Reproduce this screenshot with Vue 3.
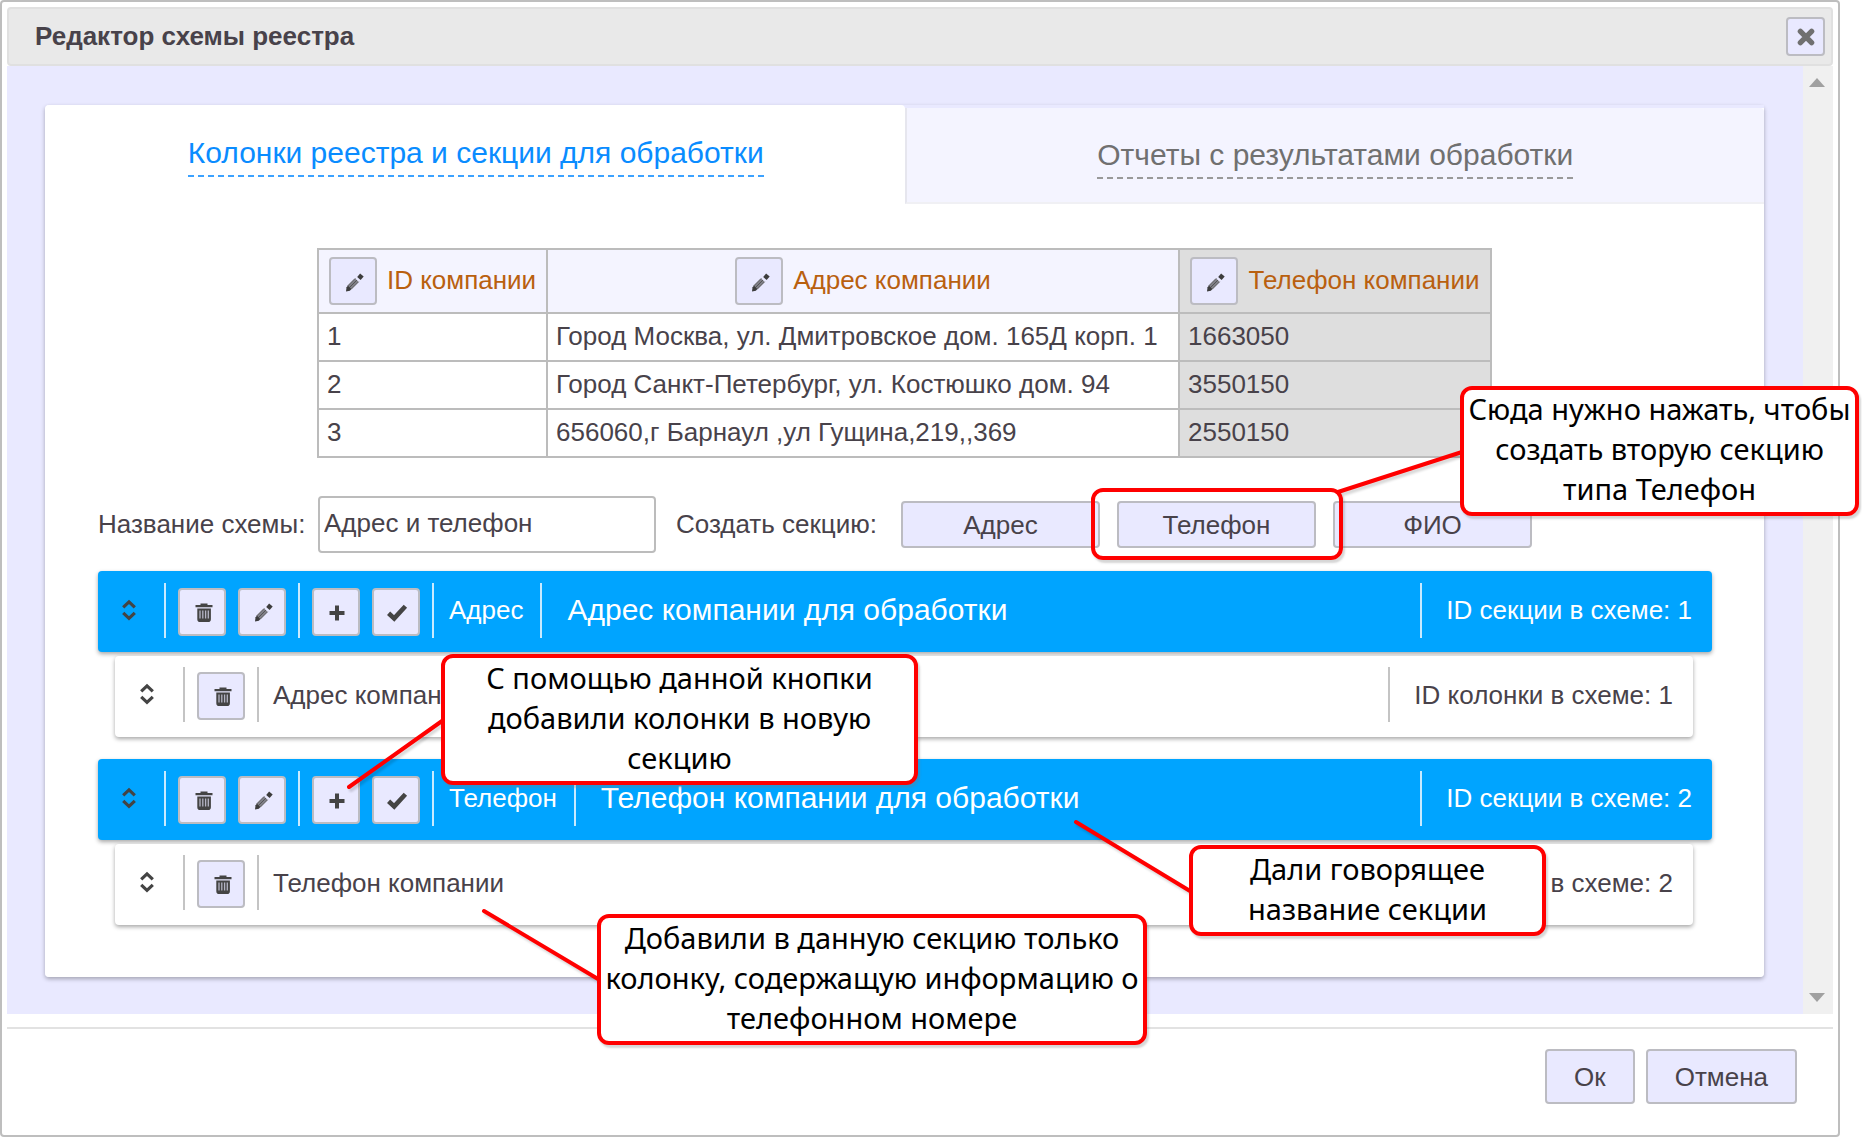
<script setup>
import { ref } from 'vue'

const schemeName = ref('Адрес и телефон')

const columns = [
  { title: 'ID компании', kind: 'id' },
  { title: 'Адрес компании', kind: 'address' },
  { title: 'Телефон компании', kind: 'phone' },
]

const rows = [
  ['1', 'Город Москва, ул. Дмитровское дом. 165Д корп. 1', '1663050'],
  ['2', 'Город Санкт-Петербург, ул. Костюшко дом. 94', '3550150'],
  ['3', '656060,г Барнаул ,ул Гущина,219,,369', '2550150'],
]

const sectionTypes = ['Адрес', 'Телефон', 'ФИО']

const sections = [
  { id: 1, type: 'Адрес', title: 'Адрес компании для обработки', column: 'Адрес компании' },
  { id: 2, type: 'Телефон', title: 'Телефон компании для обработки', column: 'Телефон компании' },
]

const callouts = [
  { name: 'create', lines: ['Сюда нужно нажать, чтобы', 'создать вторую секцию', 'типа Телефон'] },
  { name: 'add', lines: ['С помощью данной кнопки', 'добавили колонки в новую', 'секцию'] },
  { name: 'column', lines: ['Добавили в данную секцию только', 'колонку, содержащую информацию о', 'телефонном номере'] },
  { name: 'title', lines: ['Дали говорящее', 'название секции'] },
]
</script>

<template>
  <div class="stage">
    <svg class="sprite" aria-hidden="true">
      <symbol id="i-pencil" viewBox="0 0 24 24">
        <path d="M4.4 15.2l7.8-7.8 3.4 3.4-7.8 7.8z" fill="#808088" />
        <path d="M4.6 15l7.6-7.6M8 18.4l7.6-7.6M6.3 16.7l7.6-7.6" stroke="#555" stroke-width="1" fill="none" />
        <path d="M3 20.4l.5-4.2 1.6-1.4 3.2 3.2-1.4 1.7z" fill="#3c3c3c" />
        <path d="M14.2 5.9l2.9-3.3 3.6 3-3.1 3.4z" fill="#3c3c3c" />
      </symbol>
      <symbol id="i-trash" viewBox="0 0 24 24">
        <path d="M8.5 2.5h7V4h5v2.2h-17V4h5z" fill="#444" />
        <path d="M5.3 7.6h13.6v10.6q0 2.8-2.8 2.8h-8q-2.8 0-2.8-2.8z" fill="#444" />
        <path d="M8 9.6v8M10.8 9.6v8M13.6 9.6v8M16.3 9.6v8" stroke="#b4b4c4" stroke-width="1.3" />
      </symbol>
      <symbol id="i-plus" viewBox="0 0 24 24">
        <path d="M11 4.5v15M3.5 12h15" stroke="#444" stroke-width="4" />
      </symbol>
      <symbol id="i-check" viewBox="0 0 24 24">
        <path d="M2.6 12.2l5.6 5.2L19.4 5.2" stroke="#444" stroke-width="4.6" fill="none" />
      </symbol>
      <symbol id="i-sort" viewBox="0 0 24 24">
        <path d="M6.2 9.4L12 3.9l5.8 5.5M6.2 14.8l5.8 5.5 5.8-5.5" stroke="#444" stroke-width="3.2" fill="none" />
      </symbol>
      <symbol id="i-close" viewBox="0 0 24 24">
        <path d="M6.4 6.4l11.2 11.2M17.6 6.4L6.4 17.6" stroke="#707070" stroke-width="5.4" stroke-linecap="round" />
      </symbol>
    </svg>

    <section class="dialog" role="dialog" aria-labelledby="dialog-title">
      <header class="dialog-header">
        <h1 id="dialog-title">Редактор схемы реестра</h1>
        <button class="btn close" type="button" aria-label="Закрыть">
          <svg width="24" height="24"><use href="#i-close" /></svg>
        </button>
      </header>

      <div class="dialog-body">
        <main class="content">
          <div class="card">
            <nav class="tabs">
              <div class="tab active"><a href="#columns">Колонки реестра и секции для обработки</a></div>
              <div class="tab"><a href="#reports">Отчеты с результатами обработки</a></div>
            </nav>

            <table class="preview">
              <thead>
                <tr>
                  <th v-for="c in columns" :key="c.kind" :class="c.kind">
                    <div class="head">
                      <button class="btn icon" type="button" :aria-label="'Изменить ' + c.title">
                        <svg width="24" height="24"><use href="#i-pencil" /></svg>
                      </button>
                      <span>{{ c.title }}</span>
                    </div>
                  </th>
                </tr>
              </thead>
              <tbody>
                <tr v-for="r in rows" :key="r[0]">
                  <td v-for="(v, i) in r" :key="i" :class="columns[i].kind">{{ v }}</td>
                </tr>
              </tbody>
            </table>

            <form class="scheme" @submit.prevent>
              <label for="scheme-name">Название схемы:</label>
              <input id="scheme-name" v-model="schemeName" type="text" />
              <span class="create-label">Создать секцию:</span>
              <div class="create">
                <button v-for="t in sectionTypes" :key="t" class="btn" type="button">{{ t }}</button>
              </div>
            </form>

            <div class="sections">
              <article v-for="s in sections" :key="s.id" class="section">
                <div class="row section-row">
                  <span class="handle"><svg width="24" height="24"><use href="#i-sort" /></svg></span>
                  <i class="rule"></i>
                  <button class="btn icon" type="button" aria-label="Удалить секцию">
                    <svg width="24" height="24"><use href="#i-trash" /></svg>
                  </button>
                  <button class="btn icon" type="button" aria-label="Изменить секцию">
                    <svg width="24" height="24"><use href="#i-pencil" /></svg>
                  </button>
                  <i class="rule"></i>
                  <button class="btn icon" type="button" aria-label="Добавить колонки">
                    <svg width="24" height="24"><use href="#i-plus" /></svg>
                  </button>
                  <button class="btn icon" type="button" aria-label="Выбрать">
                    <svg width="24" height="24"><use href="#i-check" /></svg>
                  </button>
                  <i class="rule"></i>
                  <span class="type">{{ s.type }}</span>
                  <i class="rule"></i>
                  <h2>{{ s.title }}</h2>
                  <i class="rule"></i>
                  <span class="row-id">ID секции в схеме: {{ s.id }}</span>
                </div>
                <div class="row column-row">
                  <span class="handle"><svg width="24" height="24"><use href="#i-sort" /></svg></span>
                  <i class="rule"></i>
                  <button class="btn icon" type="button" aria-label="Удалить колонку">
                    <svg width="24" height="24"><use href="#i-trash" /></svg>
                  </button>
                  <i class="rule"></i>
                  <span class="name">{{ s.column }}</span>
                  <i class="rule"></i>
                  <span class="row-id">ID колонки в схеме: {{ s.id }}</span>
                </div>
              </article>
            </div>
          </div>
        </main>
        <div class="scrollbar" aria-hidden="true">
          <svg width="16" height="9"><path d="M0 9L8 0l8 9z" fill="#a0a0a0" /></svg>
          <svg width="16" height="9"><path d="M0 0h16L8 9z" fill="#a0a0a0" /></svg>
        </div>
      </div>

      <footer class="dialog-footer">
        <button class="btn" type="button">Ок</button>
        <button class="btn" type="button">Отмена</button>
      </footer>
    </section>

    <div class="notes">
      <svg class="pointers" aria-hidden="true">
        <path d="M1462 452L1338 492M442 721L349 787M598 979L484 911M1190 891L1076 822" />
      </svg>
      <div class="highlight"></div>
      <p v-for="c in callouts" :key="c.name" class="callout" :class="'callout-' + c.name">
        <span v-for="l in c.lines" :key="l">{{ l }}</span>
      </p>
    </div>
  </div>
</template>

<style>
body {
  margin: 0;
  background: #fff;
}
</style>

<style scoped>
* {
  box-sizing: border-box;
}

.stage {
  position: relative;
  padding: 0 22px 1px 0;
  font: 26px/32px "Liberation Sans", Arial, sans-serif;
  color: #48424a;
}

.sprite {
  position: absolute;
  width: 0;
  height: 0;
}

.dialog {
  padding: 5px;
  border: 2px solid #bebebe;
  border-radius: 4px;
  background: #fff;
}

.dialog-header {
  display: flex;
  align-items: center;
  justify-content: space-between;
  height: 59px;
  padding: 0 6px 0 26px;
  border: 2px solid #e0e0e0;
  border-radius: 4px;
  background: #e9e9e9;
}

h1 {
  margin: 0;
  padding-bottom: 2px;
  font-size: 26px;
  font-weight: bold;
}

.btn {
  padding: 0;
  border: 2px solid #bcbcc2;
  border-radius: 4px;
  background: #e9e9ff;
  color: inherit;
  font: inherit;
}

.btn svg {
  display: block;
}

.close {
  width: 39px;
  height: 39px;
  padding: 1px 0 0 6px;
}

.dialog-body {
  display: flex;
}

.content {
  flex: 1;
  padding: 39px 39px 37px 38px;
  background: #e9e9ff;
}

.scrollbar {
  display: flex;
  flex-direction: column;
  align-items: center;
  justify-content: space-between;
  width: 30px;
  padding: 12px 2px 12px 0;
  background: #f0f0f0;
}

.card {
  padding-bottom: 52px;
  border-radius: 4px;
  background: linear-gradient(#fff, #fff) 0 3px / 100% 100% no-repeat;
  box-shadow: 0 2px 4px rgba(0, 0, 0, 0.3);
}

.tabs {
  display: flex;
  align-items: flex-end;
  background: linear-gradient(#e9e9ff, #e9e9ff) 100% 0 / 50% 3px no-repeat;
}

.tab {
  flex: 1;
  height: 96px;
  padding-top: 29px;
  border-bottom: 2px solid #f0f0f4;
  border-left: 2px solid #e6e6ee;
  border-radius: 0 4px 0 0;
  background: #f4f4ff;
  text-align: center;
  font-size: 30px;
  line-height: 36px;
}

.tab.active {
  height: 99px;
  padding-top: 30px;
  border-color: #fff;
  border-radius: 4px 4px 0 0;
  background: #fff;
}

.tab a {
  display: inline-block;
  padding-bottom: 4px;
  border-bottom: 2px dashed #999;
  color: #707070;
  text-decoration: none;
}

.tab.active a {
  border-color: #3ca2ff;
  color: #0a8cff;
}

.preview {
  margin: 44px auto 0;
  border-collapse: collapse;
}

.preview th,
.preview td {
  height: 48px;
  padding: 0 8px;
  border: 2px solid #bcbcbc;
  white-space: nowrap;
  text-align: left;
}

.preview td {
  padding-bottom: 2px;
}

.preview th {
  height: 64px;
  background: #f4f4ff;
  color: #b9600f;
  font-weight: normal;
}

.preview .id {
  width: 229px;
}

.preview .address {
  width: 632px;
}

.preview .phone {
  width: 312px;
  background: #dedede;
}

.head {
  display: flex;
  align-items: center;
  justify-content: center;
  gap: 10px;
}

.head span {
  padding-bottom: 2px;
}

.icon {
  flex: none;
  width: 48px;
  height: 48px;
  padding: 3px 0 0 12px;
}

.scheme {
  display: flex;
  align-items: center;
  margin-top: 38px;
  padding: 0 53px;
  white-space: nowrap;
}

.scheme label {
  width: 220px;
  padding-bottom: 2px;
}

.scheme input {
  width: 338px;
  height: 57px;
  padding: 0 4px 2px;
  border: 2px solid #bcbcbc;
  border-radius: 4px;
  background: #fff;
  color: inherit;
  font: inherit;
}

.create-label {
  width: 225px;
  margin-left: 20px;
  padding-bottom: 2px;
}

.create {
  display: flex;
  gap: 17px;
}

.create .btn {
  width: 199px;
  height: 47px;
}

.sections {
  display: flex;
  flex-direction: column;
  gap: 22px;
  margin: 18px 52px 0 53px;
}

.section {
  display: flex;
  flex-direction: column;
  gap: 4px;
}

.row {
  display: flex;
  align-items: center;
  gap: 12px;
  height: 81px;
  border-radius: 4px;
  box-shadow: 0 2px 4px rgba(0, 0, 0, 0.35);
  white-space: nowrap;
}

.section-row {
  padding-right: 20px;
  background: #00a4ff;
  color: #fff;
}

.column-row {
  margin: 0 19px 0 17px;
  padding: 0 20px 2px 2px;
  background: #fff;
}

.handle {
  width: 54px;
  padding: 0 0 4px 19px;
}

.column-row .handle {
  padding-left: 18px;
}

.handle svg {
  display: block;
}

.rule {
  width: 2px;
  height: 55px;
  margin-bottom: 2px;
  background: #c4c4c4;
}

.section-row .rule {
  background: #c8eaff;
}

.type {
  margin: 0 5px 4px 3px;
}

h2 {
  flex: 1;
  margin: 0 0 4px 13px;
  font-size: 30px;
  font-weight: normal;
}

.name {
  flex: 1;
  margin: 0 0 2px 2px;
}

.row-id {
  margin: 0 0 4px 12px;
}

.column-row .row-id {
  margin-bottom: 2px;
}

.dialog-footer {
  display: flex;
  justify-content: flex-end;
  gap: 11px;
  margin-top: 13px;
  padding: 20px 36px 26px;
  border-top: 2px solid #e2e2e2;
}

.dialog-footer .btn {
  height: 55px;
  padding: 0 27px;
}

/* Explanatory notes laid over the dialog */
.notes {
  position: absolute;
  inset: 0;
  pointer-events: none;
}

.pointers {
  position: absolute;
  width: 100%;
  height: 100%;
  fill: none;
  stroke: #f00;
  stroke-width: 4px;
  stroke-linecap: round;
  filter: drop-shadow(2px 3px 1px rgba(0, 0, 0, 0.15));
}

.highlight,
.callout {
  position: absolute;
  border: 4px solid #f00;
  border-radius: 12px;
  box-shadow: 2px 3px 2px rgba(120, 120, 120, 0.3);
}

.highlight {
  left: 1091px;
  top: 488px;
  width: 252px;
  height: 72px;
}

.callout {
  display: flex;
  flex-direction: column;
  align-items: center;
  justify-content: center;
  margin: 0;
  padding-bottom: 4px;
  background: #fff;
  color: #000;
  font: 29px/40px "Noto Sans", "Open Sans", sans-serif;
  white-space: nowrap;
}

.callout-create {
  left: 1460px;
  top: 386px;
  width: 399px;
  height: 130px;
}

.callout-add {
  left: 441px;
  top: 654px;
  width: 477px;
  height: 131px;
}

.callout-column {
  left: 597px;
  top: 914px;
  width: 550px;
  height: 131px;
}

.callout-title {
  left: 1189px;
  top: 845px;
  width: 357px;
  height: 91px;
}
</style>
